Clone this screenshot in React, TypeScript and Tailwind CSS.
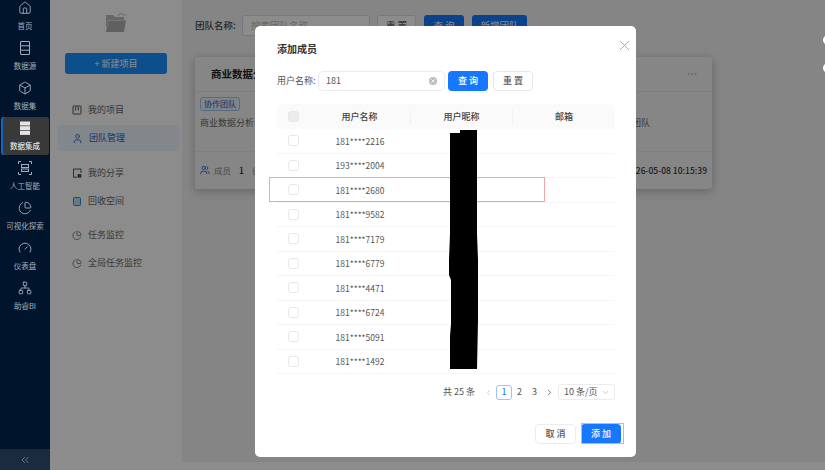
import { Box, ChevronDown, ChevronLeft, ChevronRight, ChevronsLeft, Ellipsis, Gauge, House, Network, PieChart, User, Users, X } from "lucide-react";

const font = { fontFamily: '"Noto Sans CJK SC", "Noto Sans", sans-serif' };

function ListIcon() {
  return (
    <svg viewBox="0 0 14 14" className="h-[14px] w-[14px]" fill="none" stroke="currentColor" strokeWidth="1">
      <rect x="2.5" y="0.5" width="9" height="13" rx="0.5" />
      <path d="M2.5 4.8H11.5M2.5 9.2H11.5" />
    </svg>
  );
}

function StackIcon() {
  return (
    <svg viewBox="0 0 14 14" className="h-[14px] w-[14px]" fill="currentColor">
      <rect x="2" y="0.5" width="10" height="4" />
      <rect x="2" y="5.2" width="10" height="4" />
      <rect x="2" y="9.9" width="10" height="4" />
    </svg>
  );
}

function AiIcon() {
  return (
    <svg viewBox="0 0 14 14" className="h-[14px] w-[14px]" fill="none" stroke="currentColor" strokeWidth="1">
      <path d="M0.5 3V0.5H3M11 0.5H13.5V3M13.5 11V13.5H11M3 13.5H0.5V11" />
      <rect x="3.5" y="3.5" width="7" height="3" />
      <rect x="3.5" y="8" width="7" height="2.5" />
    </svg>
  );
}

const RAIL_ITEMS = [
  { label: "首页", icon: <House className="h-[14px] w-[14px]" strokeWidth={1.5} /> },
  { label: "数据源", icon: <ListIcon /> },
  { label: "数据集", icon: <Box className="h-[14px] w-[14px]" strokeWidth={1.6} /> },
  { label: "数据集成", active: true, icon: <StackIcon /> },
  { label: "人工智能", icon: <AiIcon /> },
  { label: "可视化探索", icon: <PieChart className="h-[14px] w-[14px]" strokeWidth={1.6} /> },
  { label: "仪表盘", icon: <Gauge className="h-[14px] w-[14px]" strokeWidth={1.6} /> },
  { label: "助睿BI", icon: <Network className="h-[14px] w-[14px]" strokeWidth={1.5} /> },
];

const ROWS = [
  "181****2216",
  "193****2004",
  "181****2680",
  "181****9582",
  "181****7179",
  "181****6779",
  "181****4471",
  "181****6724",
  "181****5091",
  "181****1492",
];

function Rail() {
  return (
    <aside className="relative z-10 flex h-full w-[50px] shrink-0 flex-col bg-[#00152c]">
      <div className="-mt-[3px] flex flex-1 flex-col gap-[2px] px-[1px]">
        {RAIL_ITEMS.map((item) => (
          <div
            key={item.label}
            className={`flex h-[38px] flex-col items-center rounded-[3px] pt-[4px] ${
              item.active
                ? "bg-[#393939] font-medium text-[#e4e4e4] shadow-[inset_2px_0_0_#1565c0]"
                : "text-[#a3afbb]"
            }`}
          >
            {item.icon}
            <span className="mt-[5px] text-[7.5px] leading-[12px] whitespace-nowrap">{item.label}</span>
          </div>
        ))}
      </div>
      <div className="flex h-[21px] items-center justify-center bg-[#1b2b3e] text-[#8fa0b0]">
        <ChevronsLeft className="h-[12px] w-[12px]" strokeWidth={1.3} />
      </div>
    </aside>
  );
}

function NavRow({ label, icon, className }: { label: string; icon: React.ReactNode; className: string }) {
  return (
    <div className={`flex items-center gap-[6px] pl-[22px] text-[9px] leading-[14px] text-[#666] ${className}`}>
      <span className="flex w-[10px] justify-center">{icon}</span>
      <span>{label}</span>
    </div>
  );
}

function ProjectIcon() {
  return (
    <svg viewBox="0 0 10 10" className="h-[10px] w-[10px]" fill="none" stroke="#555" strokeWidth="1">
      <rect x="1" y="1" width="8" height="8" rx="0.5" />
      <path d="M3.7 1.5V5.5M6.3 1.5V5.5" />
    </svg>
  );
}

function ShareIcon() {
  return (
    <svg viewBox="0 0 10 10" className="h-[10px] w-[10px]" fill="none" stroke="#555" strokeWidth="1">
      <path d="M9 5V1H1.5V9.2H5" />
      <path d="M6 6.5H9V9.2H6Z" fill="#555" />
    </svg>
  );
}

function RecycleIcon() {
  return (
    <svg viewBox="0 0 10 10" className="h-[10px] w-[10px]" fill="#b9dcf0" stroke="#2b8fc4" strokeWidth="1">
      <rect x="1.5" y="1.5" width="7" height="8" rx="1" />
    </svg>
  );
}

function ProjectPanel() {
  return (
    <div className="h-full w-[132px] shrink-0 bg-white">
      <div className="flex justify-center pt-[12px]">
        <svg viewBox="0 0 22 21" className="h-[21px] w-[22px]">
          <path d="M1 3H8L10 5H19V8H3.5L1 17Z" fill="#bcbcbc" />
          <path d="M3.5 8.5H21L19 20H1Z" fill="#b0b0b0" />
          <path d="M13 4C14 1.5 18 0.5 20.5 4" fill="none" stroke="#c8c8c8" strokeWidth="1.2" />
        </svg>
      </div>
      <div className="mx-[15px] mt-[20px] flex h-[21px] items-center justify-center rounded-[3px] bg-[#1890ff] text-[9px] text-white">
        + 新建项目
      </div>
      <NavRow className="mt-[29px]" label="我的项目" icon={<ProjectIcon />} />
      <div className="mt-[8px] mr-[3px] ml-[8px] flex h-[26px] items-center gap-[6px] rounded-[4px] bg-[#eef5fd] pl-[14px] text-[9px] text-[#1b62c0]">
        <User className="h-[11px] w-[11px]" strokeWidth={1.8} />
        <span>团队管理</span>
      </div>
      <NavRow className="mt-[15px]" label="我的分享" icon={<ShareIcon />} />
      <NavRow className="mt-[14px]" label="回收空间" icon={<RecycleIcon />} />
      <NavRow className="mt-[20px]" label="任务监控" icon={<PieChart className="h-[11px] w-[11px]" strokeWidth={1.8} />} />
      <NavRow className="mt-[14px]" label="全局任务监控" icon={<PieChart className="h-[11px] w-[11px]" strokeWidth={1.8} />} />
    </div>
  );
}

function TeamContent() {
  return (
    <main className="h-[462px] flex-1 bg-[#f2f2f2] pt-[15px] pr-[113px] pl-[13px] text-[#444]">
      <div className="flex h-[21px] items-center text-[9.5px]">
        <span className="w-[47px] font-medium">团队名称:</span>
        <div className="flex h-[21px] w-[128px] items-center rounded-[3px] border border-[#ddd] bg-white pl-[8px] text-[#bbb]">
          搜索团队名称
        </div>
        <div className="ml-[7px] flex h-[21px] w-[39px] items-center justify-center rounded-[3px] border border-[#ddd] bg-white">重 置</div>
        <div className="ml-[8px] flex h-[21px] w-[40px] items-center justify-center rounded-[3px] bg-[#1677ff] text-white">查 询</div>
        <div className="ml-[8px] flex h-[21px] w-[55px] items-center justify-center rounded-[3px] bg-[#1677ff] text-white">新增团队</div>
      </div>
      <section className="mt-[21px] h-[132px] rounded-[3px] bg-[#f5f5f5] shadow-[0_2px_10px_rgba(0,0,0,0.25)]">
        <div className="flex h-[35px] items-center justify-between border-b border-[#e6e6e6] pr-[14px] pl-[16px]">
          <span className="text-[10.5px] leading-[14px] font-bold text-[#222]">商业数据分析</span>
          <Ellipsis className="h-[12px] w-[12px] text-[#aaa]" strokeWidth={1.2} />
        </div>
        <div className="h-[60px] border-b border-[#eaeaea] pt-[5px] pr-[62px] pl-[5px]">
          <span className="block h-[14px] w-[40px] rounded-[3px] border border-[#9fc3ee] bg-[#e6f1fc] text-center text-[8px] leading-[12px] text-[#1b62c0]">
            协作团队
          </span>
          <div className="mt-[5px] flex justify-between text-[9px] leading-[14px] text-[#666]">
            <span>商业数据分析</span>
            <span>团队</span>
          </div>
        </div>
        <div className="flex h-[36px] items-center justify-between px-[5px] text-[8.5px] leading-[12px]">
          <span className="flex items-center gap-[4px]">
            <Users className="h-[10px] w-[10px] text-[#1b62c0]" />
            <span className="text-[#888]">成员</span>
            <b className="ml-[4px] font-medium text-[#222]">1</b>
            <span className="ml-[4px] text-[#888]">创建</span>
          </span>
          <span className="font-medium text-[#333]">2026-05-08 10:15:39</span>
        </div>
      </section>
    </main>
  );
}

function Checkbox({ header }: { header?: boolean }) {
  return <span className={`block h-[11px] w-[11px] rounded-[3px] border border-[#e8e8e8] ${header ? "bg-[#ececec]" : "bg-white"}`} />;
}

function MemberModal() {
  return (
    <div className="relative mt-[26px] ml-[255px] h-[431px] w-[381px] rounded-[5px] bg-white pt-[16px] pr-[21px] pl-[22px] text-[#555]">
      <button className="absolute top-[11px] right-[3px] text-[#8c8c8c]">
        <X className="h-[17px] w-[17px]" strokeWidth={1} />
      </button>
      <h2 className="text-[10px] leading-[13px] font-bold text-[#333]">添加成员</h2>

      <div className="mt-[16px] flex h-[20px] items-center text-[9px] leading-[14px]">
        <span className="w-[41px] whitespace-nowrap">用户名称:</span>
        <div className="flex h-[20px] w-[127px] items-center justify-between rounded-[5px] border border-[#ececec] px-[7px]">
          <span>181</span>
          <span className="flex h-[8px] w-[8px] items-center justify-center rounded-full bg-[#bdbdbd] text-white">
            <X className="h-[6px] w-[6px]" strokeWidth={3} />
          </span>
        </div>
        <div className="ml-[3px] flex h-[20px] w-[40px] items-center justify-center rounded-[4px] bg-[#1677ff] font-medium text-white">查 询</div>
        <div className="ml-[5px] flex h-[20px] w-[40px] items-center justify-center rounded-[4px] border border-[#e8e8e8] font-medium">重 置</div>
      </div>

      <div className="mt-[13px] text-[9px] leading-[14px]">
        <div className="grid h-[25px] grid-cols-[32px_102px_102px_102px] items-center rounded-t-[5px] bg-[#fafafa] font-medium text-[#444]">
          <span className="pl-[11px]"><Checkbox header /></span>
          <span className="border-r border-[#f0f0f0] text-center">用户名称</span>
          <span className="border-r border-[#f0f0f0] text-center">用户昵称</span>
          <span className="text-center">邮箱</span>
        </div>
        {ROWS.map((name) => (
          <div key={name} className="grid h-[24.5px] grid-cols-[32px_102px_102px_102px] items-center border-b border-[#f5f5f5]">
            <span className="pl-[11px]"><Checkbox /></span>
            <span className="text-center text-[8.5px]">{name}</span>
            <span />
            <span />
          </div>
        ))}
      </div>

      <div className="mt-[10px] flex h-[16px] items-center justify-end text-[9px] leading-[14px]">
        <span className="mr-[9px] whitespace-nowrap">共 25 条</span>
        <ChevronLeft className="h-[9px] w-[9px] text-[#c4c4c4]" />
        <span className="ml-[3px] flex h-[15px] w-[16px] items-center justify-center rounded-[3px] border border-[#9cc5ff] text-[#1677ff]">1</span>
        <span className="w-[15px] text-center">2</span>
        <span className="w-[15px] text-center">3</span>
        <ChevronRight className="ml-[3px] h-[9px] w-[9px] text-[#555]" />
        <div className="ml-[4px] flex h-[16px] w-[57px] items-center justify-between rounded-[3px] border border-[#ececec] pr-[4px] pl-[5px] whitespace-nowrap">
          <span>10 条/页</span>
          <ChevronDown className="h-[9px] w-[9px] text-[#bbb]" />
        </div>
      </div>

      <div className="mt-[24px] -mr-[6px] flex justify-end gap-[5px] text-[9px] leading-[14px] font-medium">
        <div className="flex h-[20px] w-[41px] items-center justify-center rounded-[4px] border border-[#ececec]">取 消</div>
        <div className="flex h-[20px] w-[40px] items-center justify-center rounded-[4px] bg-[#1677ff] text-white">添 加</div>
      </div>
    </div>
  );
}

export default function App() {
  return (
    <div className="relative flex h-[470px] w-[825px] overflow-hidden bg-white" style={font}>
      <Rail />
      <ProjectPanel />
      <TeamContent />

      {/* mask + dialog */}
      <div className="absolute inset-0 bg-black/45">
        <MemberModal />
      </div>

      {/* markup drawn over the screenshot */}
      <div className="absolute top-[177px] left-[269px] h-[25px] w-[276px] border border-[#f3a3a3]" />
      <div className="absolute top-[423px] left-[581px] h-[21px] w-[43px] border border-[#f3a3a3]" />
      <svg className="absolute top-[130px] left-[449px] h-[240px] w-[30px]" viewBox="0 0 30 240">
        <path d="M11 0H28V104L29 130V190L28 239H1V206L2 194V150L0 145V130L1 104V3H11Z" fill="#000" />
      </svg>
      <div className="absolute top-[35px] -right-[8px] h-[10px] w-[10px] rounded-full bg-white" />
      <div className="absolute top-[63px] -right-[8px] h-[10px] w-[10px] rounded-full bg-white" />
    </div>
  );
}
